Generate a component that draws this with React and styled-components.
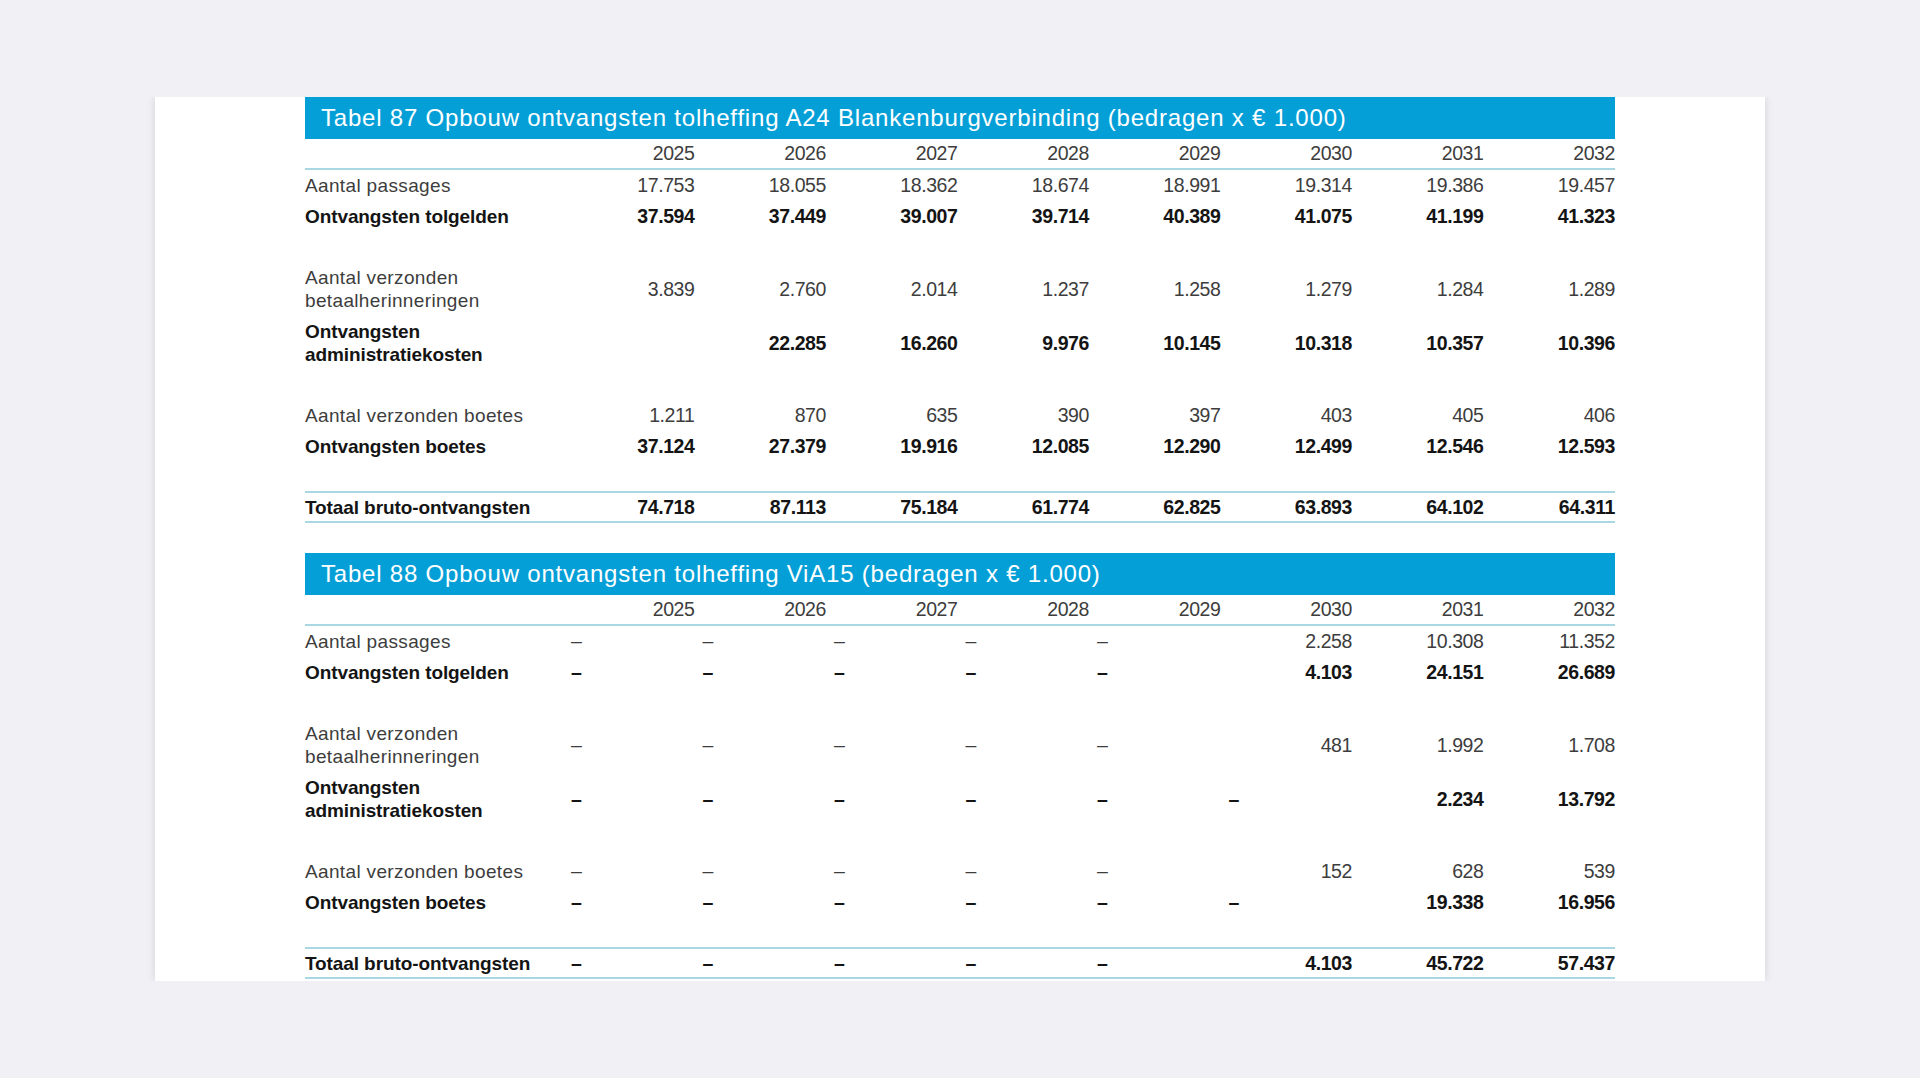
import styled, { createGlobalStyle } from "styled-components";

const GlobalStyle = createGlobalStyle`
  html, body {
    margin: 0;
    padding: 0;
    background: #f1f0f5;
  }
`;

const Backdrop = styled.div`
  padding-top: 97px;
  min-height: 100vh;
  box-sizing: border-box;
`;

const Sheet = styled.div`
  width: 1610px;
  margin: 0 auto;
  padding: 0 150px 2px;
  box-sizing: border-box;
  background: #ffffff;
  box-shadow: 0 0 9px rgba(0, 0, 0, 0.13);
  clip-path: inset(0 -20px);
`;

const Table = styled.section`
  width: 100%;

  & + & {
    margin-top: 30px;
  }
`;

const Caption = styled.div`
  height: 42px;
  display: flex;
  align-items: center;
  padding-left: 16px;
  background: #059fd8;
  color: #ffffff;
  font-family: "Liberation Sans", Arial, sans-serif;
  font-size: 24px;
  letter-spacing: 0.8px;
`;

const Grid = styled.div`
  display: grid;
  grid-template-columns: 258px repeat(8, 1fr);
  align-items: center;
`;

const YearRow = styled(Grid)`
  height: 29px;
  border-bottom: 2px solid #a9d8e2;
`;

const Row = styled(Grid)`
  height: ${(p) => (p.$tall ? 54 : p.$total ? 28 : 31)}px;
  margin-top: ${(p) => p.$gap || 0}px;
  ${(p) =>
    p.$total &&
    `
    border-top: 2px solid #a9d8e2;
    border-bottom: 2px solid #a9d8e2;
  `}
`;

const Label = styled.div`
  font-family: "Liberation Sans", Arial, sans-serif;
  font-size: 19px;
  line-height: 23px;
  white-space: pre-line;
  font-weight: ${(p) => (p.$bold ? 700 : 400)};
  letter-spacing: ${(p) => (p.$bold ? "-0.1px" : "0.35px")};
  color: ${(p) => (p.$bold ? "#141414" : "#3d3d3d")};
`;

const Num = styled.div`
  font-family: "Liberation Sans", Arial, sans-serif;
  font-size: 19.5px;
  line-height: 23px;
  letter-spacing: -0.4px;
  text-align: ${(p) => (p.$dash ? "left" : "right")};
  padding-left: ${(p) => (p.$dash ? "8px" : "0")};
  font-weight: ${(p) => (p.$bold ? 700 : 400)};
  color: ${(p) => (p.$bold ? "#141414" : "#3d3d3d")};
`;

const YEARS = ["2025", "2026", "2027", "2028", "2029", "2030", "2031", "2032"];
const D = "–";

const tables = [
  {
    title: "Tabel 87 Opbouw ontvangsten tolheffing A24 Blankenburgverbinding (bedragen x € 1.000)",
    rows: [
      { label: "Aantal passages", values: ["17.753", "18.055", "18.362", "18.674", "18.991", "19.314", "19.386", "19.457"] },
      { label: "Ontvangsten tolgelden", bold: true, values: ["37.594", "37.449", "39.007", "39.714", "40.389", "41.075", "41.199", "41.323"] },
      { label: "Aantal verzonden\nbetaalherinneringen", tall: true, gap: 30, values: ["3.839", "2.760", "2.014", "1.237", "1.258", "1.279", "1.284", "1.289"] },
      { label: "Ontvangsten\nadministratiekosten", tall: true, bold: true, values: ["", "22.285", "16.260", "9.976", "10.145", "10.318", "10.357", "10.396"] },
      { label: "Aantal verzonden boetes", gap: 30, values: ["1.211", "870", "635", "390", "397", "403", "405", "406"] },
      { label: "Ontvangsten boetes", bold: true, values: ["37.124", "27.379", "19.916", "12.085", "12.290", "12.499", "12.546", "12.593"] },
      { label: "Totaal bruto-ontvangsten", bold: true, total: true, gap: 29, values: ["74.718", "87.113", "75.184", "61.774", "62.825", "63.893", "64.102", "64.311"] },
    ],
  },
  {
    title: "Tabel 88 Opbouw ontvangsten tolheffing ViA15 (bedragen x € 1.000)",
    rows: [
      { label: "Aantal passages", values: [D, D, D, D, D, "2.258", "10.308", "11.352"] },
      { label: "Ontvangsten tolgelden", bold: true, values: [D, D, D, D, D, "4.103", "24.151", "26.689"] },
      { label: "Aantal verzonden\nbetaalherinneringen", tall: true, gap: 30, values: [D, D, D, D, D, "481", "1.992", "1.708"] },
      { label: "Ontvangsten\nadministratiekosten", tall: true, bold: true, values: [D, D, D, D, D, D, "2.234", "13.792"] },
      { label: "Aantal verzonden boetes", gap: 30, values: [D, D, D, D, D, "152", "628", "539"] },
      { label: "Ontvangsten boetes", bold: true, values: [D, D, D, D, D, D, "19.338", "16.956"] },
      { label: "Totaal bruto-ontvangsten", bold: true, total: true, gap: 29, values: [D, D, D, D, D, "4.103", "45.722", "57.437"] },
    ],
  },
];

const App = () => {
  return (
    <>
      <GlobalStyle />
      <Backdrop>
        <Sheet>
          {tables.map((table) => (
            <Table key={table.title}>
              <Caption>{table.title}</Caption>
              <YearRow>
                <span />
                {YEARS.map((year) => (
                  <Num key={year}>{year}</Num>
                ))}
              </YearRow>
              {table.rows.map((row) => (
                <Row key={row.label} $tall={row.tall} $total={row.total} $gap={row.gap}>
                  <Label $bold={row.bold}>{row.label}</Label>
                  {row.values.map((value, i) => (
                    <Num key={i} $bold={row.bold} $dash={value === D}>
                      {value}
                    </Num>
                  ))}
                </Row>
              ))}
            </Table>
          ))}
        </Sheet>
      </Backdrop>
    </>
  );
};

export default App;
